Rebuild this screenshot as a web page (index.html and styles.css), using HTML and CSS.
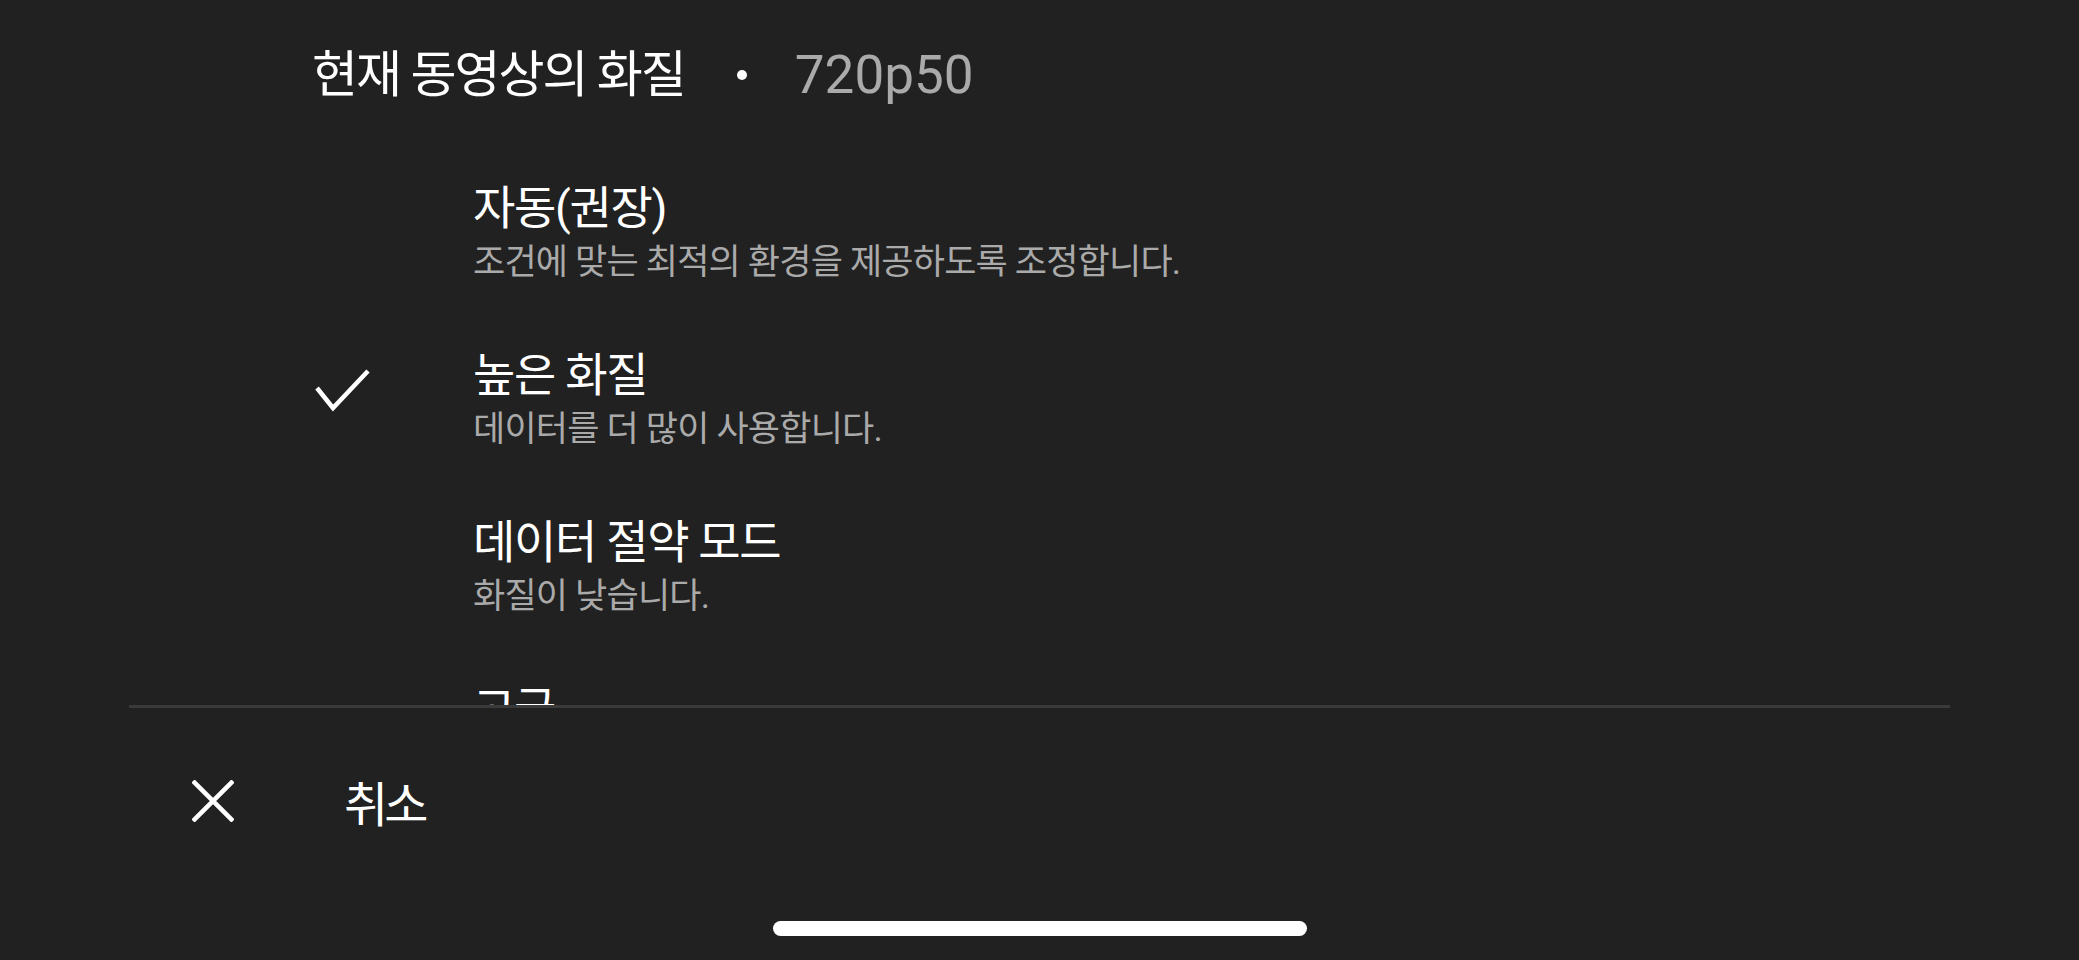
FILE: index.html
```html
<!DOCTYPE html>
<html lang="ko">
<head>
<meta charset="utf-8">
<title>화질</title>
<link rel="stylesheet" href="styles.css">
</head>
<body>
<div class="sheet">
  <div class="header">
    <span class="head-title">현재 동영상의 화질</span>
    <span class="dot"></span>
    <span class="res">720p50</span>
  </div>
  <div class="list">
    <div class="item">
      <div class="mark"></div>
      <div class="text">
        <div class="item-title">자동(권장)</div>
        <div class="item-sub">조건에 맞는 최적의 환경을 제공하도록 조정합니다.</div>
      </div>
    </div>
    <div class="item">
      <div class="mark">
        <svg class="check" width="56" height="44" viewBox="0 0 56 44"><polyline points="2,20 18,40 53,3" fill="none" stroke="#fff" stroke-width="4.5"/></svg>
      </div>
      <div class="text">
        <div class="item-title">높은 화질</div>
        <div class="item-sub">데이터를 더 많이 사용합니다.</div>
      </div>
    </div>
    <div class="item">
      <div class="mark"></div>
      <div class="text">
        <div class="item-title">데이터 절약 모드</div>
        <div class="item-sub">화질이 낮습니다.</div>
      </div>
    </div>
    <div class="item">
      <div class="mark"></div>
      <div class="text">
        <div class="item-title">고급</div>
        <div class="item-sub">특정 화질을 선택합니다.</div>
      </div>
    </div>
  </div>
  <div class="divider"></div>
  <div class="cancel">
    <svg class="close" width="42" height="42" viewBox="0 0 42 42"><path d="M1 1 L41 41 M41 1 L1 41" stroke="#fff" stroke-width="4.5" fill="none"/></svg>
    <span class="cancel-label">취소</span>
  </div>
  <div class="home-bar"></div>
</div>
</body>
</html>
```

FILE: styles.css
```css
html, body {
  margin: 0;
  padding: 0;
  background: #212121;
}
body {
  width: 2079px;
  height: 960px;
  overflow: hidden;
  font-family: Roboto, "Noto Sans CJK KR", sans-serif;
  color: #ffffff;
}
.sheet {
  display: flex;
  flex-direction: column;
  height: 960px;
}
.header {
  box-sizing: border-box;
  height: 150px;
  padding: 0 0 0 312px;
  display: flex;
  align-items: center;
  align-self: stretch;
  font-size: 50px;
  line-height: 60px;
  flex: none;
}
.head-title {
  letter-spacing: -2px;
}
.dot {
  width: 10px;
  height: 10px;
  border-radius: 50%;
  background: #ffffff;
  margin: 0 48px 0 52px;
}
.res {
  color: #aaaaaa;
  font-size: 53px;
}
.list {
  box-sizing: border-box;
  padding: 30px 0 0 312px;
  height: 555px;
  overflow: hidden;
  flex: none;
}
.item {
  display: flex;
  height: 167px;
}
.mark {
  width: 161px;
  flex: none;
  padding-left: 3px;
  box-sizing: border-box;
}
.check {
  display: block;
  margin-top: 21px;
}
.item-title {
  font-size: 46px;
  line-height: 56px;
  letter-spacing: -1.3px;
}
.item-sub {
  font-size: 35px;
  line-height: 44px;
  color: #aaaaaa;
  letter-spacing: -0.8px;
  margin-top: 5px;
}
.divider {
  margin: 0 129px;
  height: 3px;
  background: #3a3a3a;
  flex: none;
}
.cancel {
  height: 186px;
  display: flex;
  align-items: center;
  padding-left: 192px;
  flex: none;
}
.close {
  display: block;
}
.cancel-label {
  font-size: 48px;
  margin-left: 110px;
  letter-spacing: -0.08em;
}
.home-bar {
  margin: 27px 0 0 773px;
  width: 534px;
  height: 15px;
  border-radius: 8px;
  background: #ffffff;
  flex: none;
}
```
